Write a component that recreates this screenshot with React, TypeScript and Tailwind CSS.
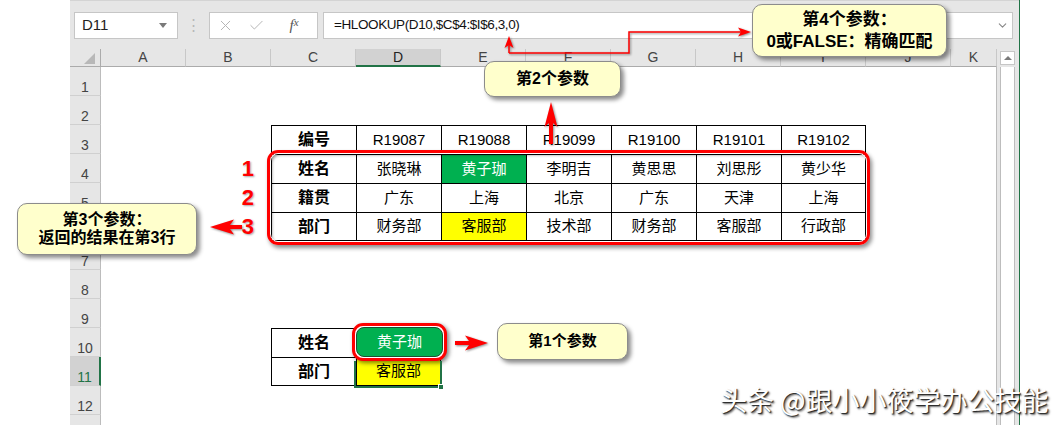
import { X, Check, ChevronDown } from "lucide-react";

const cols = ["A", "B", "C", "D", "E", "F", "G", "H", "I", "J", "K"];

const table1 = [
	["编号", "R19087", "R19088", "R19099", "R19100", "R19101", "R19102"],
	["姓名", "张晓琳", "黄子珈", "李明吉", "黄思思", "刘思彤", "黄少华"],
	["籍贯", "广东", "上海", "北京", "广东", "天津", "上海"],
	["部门", "财务部", "客服部", "技术部", "财务部", "客服部", "行政部"],
];

const table2 = [
	["姓名", "黄子珈"],
	["部门", "客服部"],
];

type Cell = { text?: string; cls: string };

function getCell(r: number, c: number): Cell {
	// first table C3:I6
	if (r >= 3 && r <= 6 && c >= 2 && c <= 8) {
		let cls = "border-l border-t border-black";
		if (c === 8) cls += " border-r";
		if (r === 6) cls += " border-b";
		if (c === 2) cls += " font-bold text-[16px]";
		if (r === 4 && c === 4) cls += " bg-[#00b050] text-white";
		if (r === 6 && c === 4) cls += " bg-[#ffff00]";
		return { text: table1[r - 3][c - 2], cls };
	}
	// lookup table C10:D11
	if (r >= 10 && r <= 11 && c >= 2 && c <= 3) {
		let cls = "border-l border-t border-black";
		if (c === 3) cls += " border-r";
		if (r === 11) cls += " border-b";
		if (c === 2) cls += " font-bold text-[16px]";
		if (r === 10 && c === 3) cls += " bg-[#00b050] text-white";
		if (r === 11 && c === 3) cls += " bg-[#ffff00]";
		return { text: table2[r - 10][c - 2], cls };
	}
	// row markers 1/2/3
	if (r >= 4 && r <= 6 && c === 1) {
		return {
			text: String(r - 3),
			cls: "!justify-end pr-[17px] text-[22px] font-bold text-[#ff0000] [text-shadow:1px_1px_2px_rgba(0,0,0,0.35)]",
		};
	}
	return { cls: "" };
}

const rows = Array.from({ length: 13 }, (_, i) => i + 1);

function Callout({ className, lines }: { className: string; lines: string[] }) {
	return (
		<div
			className={
				"absolute flex flex-col items-center justify-center rounded-[10px] border border-[#8c8c8c] bg-[#ffffcc] font-bold text-black shadow-[3px_3px_4px_rgba(0,0,0,0.45)] " +
				className
			}
		>
			{lines.map((l, i) => (
				<div key={i}>{l}</div>
			))}
		</div>
	);
}

export default function App() {
	return (
		<div className="relative flex h-[425px] w-[1061px] overflow-hidden bg-white font-['Liberation_Sans','Noto_Sans_CJK_SC',sans-serif] text-black">
			<div className="w-[70px] shrink-0" />

			{/* excel window */}
			<div className="flex w-[949px] shrink-0 flex-col">
				{/* formula bar */}
				<div className="flex h-[49px] shrink-0 items-start border-t border-[#d4d4d4] bg-[#e6e6e6] pl-[4px] pt-[11px]">
					<div className="flex h-[27px] w-[104px] items-center justify-between border border-[#c6c6c6] bg-white pl-[7px] pr-[10px] text-[15px] text-[#222]">
						<span>D11</span>
						<span className="h-0 w-0 border-x-[4px] border-t-[5px] border-x-transparent border-t-[#7a7a7a]" />
					</div>
					<div className="flex h-[27px] w-[31px] items-center justify-center text-[15px] text-[#b8b8b8]">⋮</div>
					<div className="flex h-[27px] w-[109px] items-center border border-[#c6c6c6] bg-white">
						<span className="flex w-[31px] justify-center text-[#b5b5b5]">
							<X size={17} strokeWidth={1.4} />
						</span>
						<span className="flex w-[30px] justify-center text-[#b5b5b5]">
							<Check size={17} strokeWidth={1.4} />
						</span>
						<span className="flex flex-1 justify-center font-['Liberation_Serif',serif] text-[15px] italic text-[#555]">
							f<span className="text-[11px]">x</span>
						</span>
					</div>
					<div className="ml-[5px] flex h-[27px] w-[690px] items-center justify-between border border-[#c6c6c6] bg-white pl-[10px] pr-[3px] text-[13.5px] tracking-[-0.4px] text-[#111]">
						<span>=HLOOKUP(D10,$C$4:$I$6,3,0)</span>
						<ChevronDown size={13} strokeWidth={2} className="text-[#888]" />
					</div>
				</div>

				<div className="flex flex-1">
					{/* sheet */}
					<div className="flex w-[927px] shrink-0 flex-col border-r border-[#bcbcbc]">
						{/* column headers */}
						<div className="flex h-[18px] shrink-0 bg-[#e6e6e6] text-[14px] text-[#444]">
							<div className="relative w-[31px] shrink-0 border-b border-r border-[#ababab]">
								<span className="absolute bottom-[2px] right-[5px] h-0 w-0 border-b-[11px] border-l-[11px] border-b-[#b8b8b8] border-l-transparent" />
							</div>
							{cols.map((c, i) => (
								<div
									key={c}
									className={
										"flex shrink-0 items-center justify-center border-r border-[#c8c8c8] " +
										(i === 10 ? "w-[46px] border-b border-b-[#ababab] " : "w-[85px] ") +
										(c === "D"
											? "border-b-2 border-b-[#217346] bg-[#d2d2d2] text-[#222]"
											: i !== 10
												? "border-b border-b-[#ababab]"
												: "")
									}
								>
									{c}
								</div>
							))}
						</div>

						{rows.map(r => (
							<div key={r} className="flex h-[29px] shrink-0 text-[15px]">
								<div
									className={
										"flex w-[31px] shrink-0 items-end justify-center border-b border-b-[#d0d0d0] pb-[1px] text-[14px] leading-[14px] " +
										(r === 11
											? "border-r-2 border-r-[#217346] bg-[#d2d2d2] text-[#217346]"
											: "border-r border-r-[#bcbcbc] bg-[#e6e6e6] text-[#444]")
									}
								>
									{r < 13 ? r : ""}
								</div>
								{cols.map((_, c) => {
									const cell = getCell(r, c);
									return (
										<div
											key={c}
											className={
												"flex shrink-0 items-center justify-center " +
												(c === 10 ? "w-[46px] " : "w-[85px] ") +
												cell.cls
											}
										>
											{cell.text}
										</div>
									);
								})}
							</div>
						))}
					</div>

					{/* vertical scrollbar */}
					<div className="flex w-[22px] shrink-0 flex-col bg-[#e6e6e6] pl-[3px]">
						<div className="mt-[2px] flex h-[14px] w-[15px] items-center justify-center border border-[#c6c6c6] bg-white">
							<span className="h-0 w-0 border-x-[4px] border-b-[4px] border-x-transparent border-b-[#7a7a7a]" />
						</div>
						<div className="mt-[2px] w-[15px] flex-1 border-x border-[#bdbdbd] bg-white" />
					</div>
				</div>
			</div>
			<div className="w-[1px] shrink-0 bg-[#217346]" />

			{/* big red highlight around rows 4-6 */}
			<div className="absolute left-[267px] top-[150px] h-[95px] w-[603px] rounded-[11px] border-[3px] border-[#ff0000] shadow-[inset_0_0_0_1px_#fff,inset_2px_2px_3px_rgba(0,0,0,0.45),2px_3px_4px_rgba(0,0,0,0.45)]" />

			{/* D10 highlight */}
			<div className="absolute left-[352px] top-[323px] flex h-[38px] w-[95px] rounded-[11px] border-[3px] border-[#ff0000] bg-white p-[1px] shadow-[2px_2px_4px_rgba(0,0,0,0.5)]">
				<div className="flex flex-1 items-center justify-center rounded-[8px] border border-[#1d4f31] bg-[#00b050] text-[15px] text-white">
					黄子珈
				</div>
			</div>

			{/* active cell D11 */}
			<div className="absolute left-[354px] top-[361px] h-[27px] w-[88px] border-2 border-t-0 border-[#217346]" />
			<div className="absolute left-[438px] top-[384px] h-[6px] w-[6px] border border-white bg-[#217346]" />

			<Callout className="left-[752px] top-[4px] h-[53px] w-[195px] text-[17px] leading-[22px]" lines={["第4个参数：", "0或FALSE：精确匹配"]} />
			<Callout className="left-[484px] top-[61px] h-[36px] w-[137px] text-[16px]" lines={["第2个参数"]} />
			<Callout className="left-[17px] top-[203px] h-[52px] w-[180px] text-[16px] leading-[18px]" lines={["第3个参数：", "返回的结果在第3行"]} />
			<Callout className="left-[497px] top-[323px] h-[37px] w-[131px] text-[15px]" lines={["第1个参数"]} />

			{/* arrows */}
			<svg className="pointer-events-none absolute left-0 top-0 drop-shadow-[1px_1px_1px_rgba(0,0,0,0.45)]" width="1061" height="425" viewBox="0 0 1061 425">
				<path d="M509 53 V44 M509 53 H629 V32 H741" fill="none" stroke="#ff0000" strokeWidth="1.5" />
				<path d="M509 36 L513.5 48 L509 45 L504.5 48 Z" fill="#ff0000" />
				<path d="M751 32 L738 27.5 L741 32 L738 36.5 Z" fill="#ff0000" />
				<path d="M551 102 L557.5 127 L553 123 L553 144 L549 144 L549 123 L544.5 127 Z" fill="#ff0000" />
				<path d="M210 227 L234 219.5 L230 225 L242 225 L242 229 L230 229 L234 234.5 Z" fill="#ff0000" />
				<path d="M488 343 L465 335.5 L469 341 L455 341 L455 345 L469 345 L465 350.5 Z" fill="#ff0000" />
			</svg>

			{/* watermark */}
			<div className="absolute left-[720px] top-[384px] font-['Noto_Sans_CJK_SC',sans-serif] text-[27px] leading-[32px] text-white [text-shadow:1px_1px_1px_#222,2px_2px_2px_rgba(0,0,0,0.55)]">
				头条 @跟小小筱学办公技能
			</div>
		</div>
	);
}
